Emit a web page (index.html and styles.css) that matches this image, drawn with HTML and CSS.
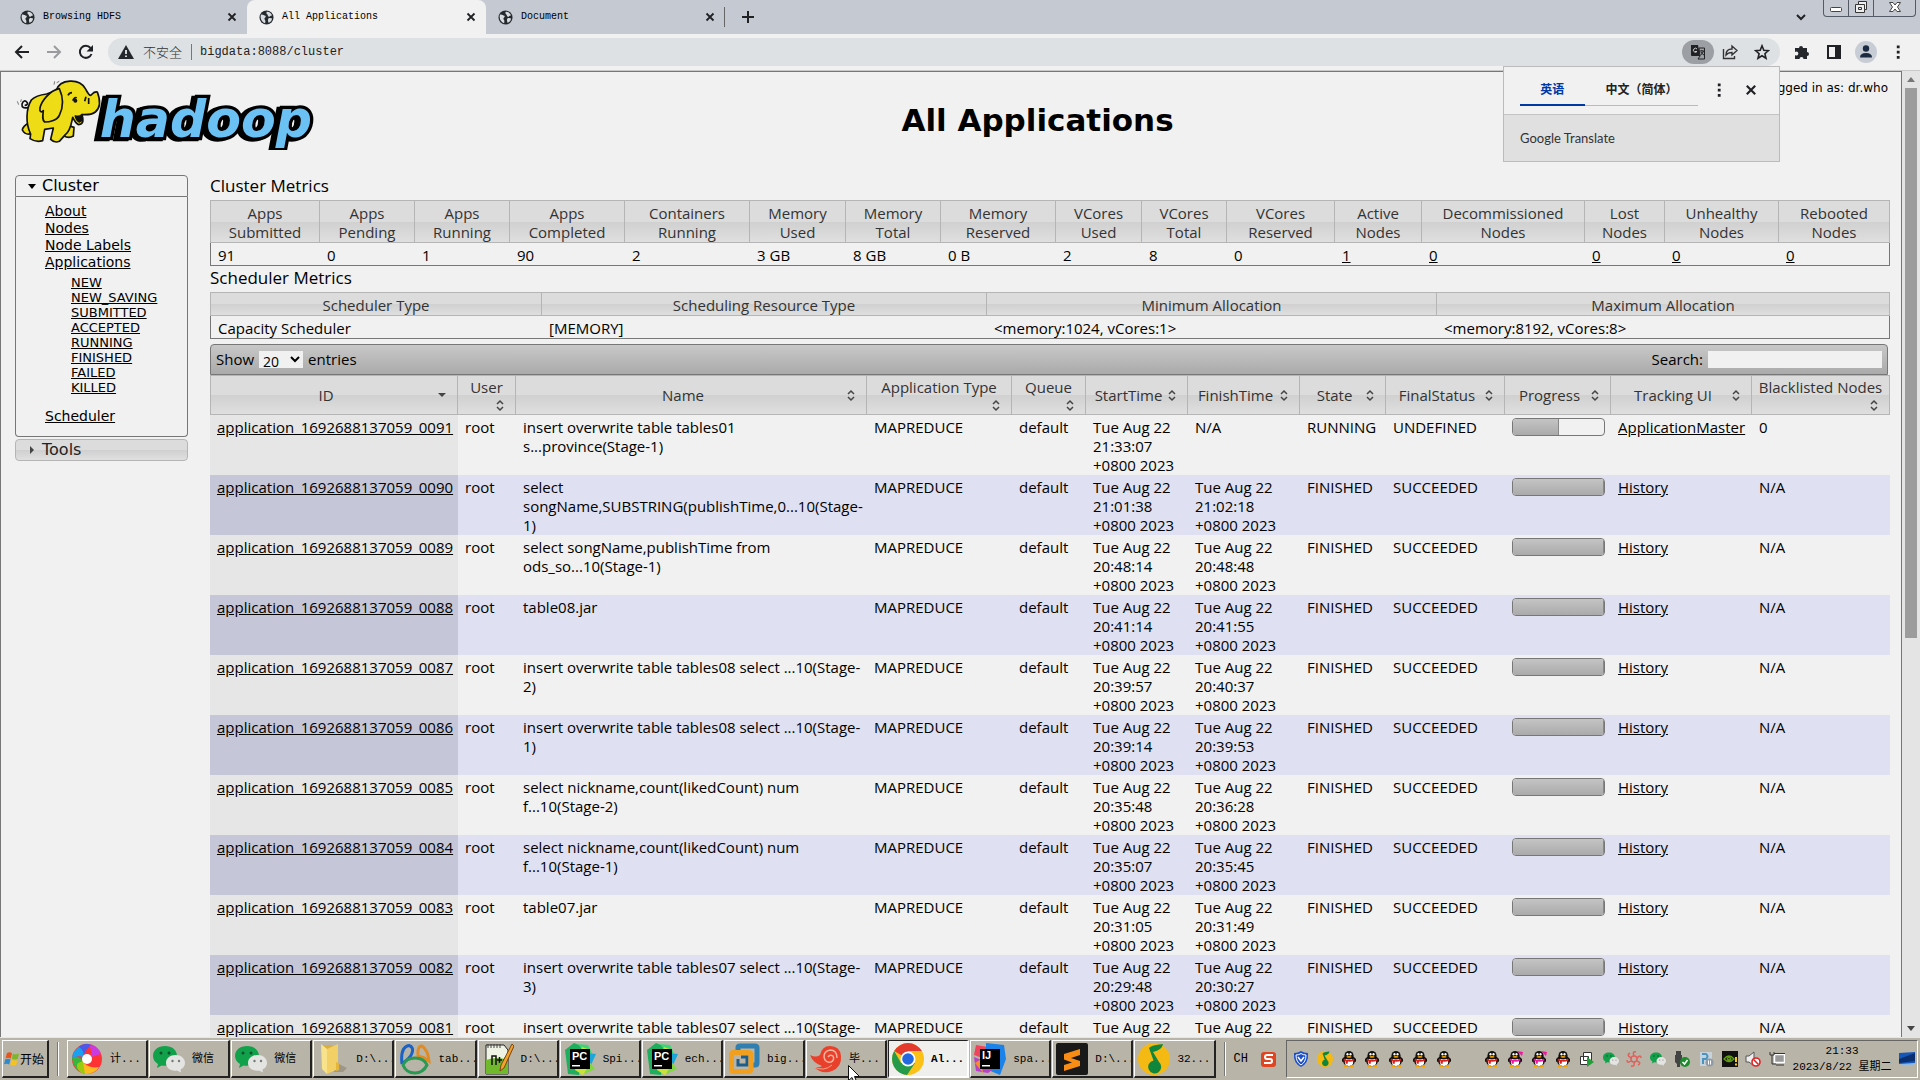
FILE: index.html
```html
<!DOCTYPE html>
<html lang="en">
<head>
    <meta charset="UTF-8">
    <meta name="viewport" content="width=device-width, initial-scale=1.0">
    <title>All Applications</title>
    <link rel="stylesheet" href="styles.css">
</head>
<body>

<svg class="defs" width="0" height="0">
  <defs>
    <symbol id="globe" viewBox="0 0 16 16">
      <circle cx="8" cy="8" r="7.5" fill="#24292e"/>
      <path d="M2 5 C4 4 5 6 7 6 C8 8 5 8 6 10 C7 11 7 12 6.500 14 C3 13 1 9 2 5z M8 2 C11 1.500 13.500 4 14 6 C12 5.500 12 8 10 7 C9 6 10 5 8 4z M10 9 C12 8 13 9 14 9 C13.500 12 12 13 10 13.500 C10 12 9 11 10 9z" fill="#d8dbe0"/>
    </symbol>
    <symbol id="close" viewBox="0 0 10 10">
      <path d="M1.500 1.500 L8.500 8.500 M8.500 1.500 L1.500 8.500" stroke="#202124" stroke-width="1.800"/>
    </symbol>
    <symbol id="dots" viewBox="0 0 16 16">
      <path d="M6.800 1.500h2.800v2.800H6.800z M6.800 6.700h2.800v2.800H6.800z M6.800 11.900h2.800v2.800H6.800z" fill="#202124"/>
    </symbol>
    <symbol id="sort" viewBox="0 0 16 16">
      <path d="M5 7 L8 4 L11 7 M5 10 L8 13 L11 10" fill="none" stroke="#444" stroke-width="1.500"/>
    </symbol>
    <symbol id="wechat" viewBox="0 0 32 28">
      <path d="M12 1 C5 1 0 5 0 11 C0 14.500 2 17.500 5 19 L4 23 L8.500 20.500 C17 22 24 17 24 11 C24 5 19 1 12 1z" fill="#12a14b"/>
      <path d="M22.500 10 C17 10 13 13.500 13 18 C13 23 18 26.500 24 25.500 L28 27.500 L27.500 24.500 C30.500 23 32 20.500 32 18 C32 13.500 28 10 22.500 10z" fill="#e4e4e2"/>
      <circle cx="8" cy="8" r="1.500" fill="#13502d"/><circle cx="16" cy="8" r="1.500" fill="#13502d"/>
      <circle cx="19.500" cy="16" r="1.200" fill="#777"/><circle cx="26" cy="16" r="1.200" fill="#777"/>
    </symbol>
    <symbol id="pycharm" viewBox="0 0 32 32">
      <path d="M1 7 L10 0 L20 4 L15 32 L4 31z" fill="#1fae5e"/>
      <path d="M14 1 L24 2 L28 10 L22 12z" fill="#3bd675"/>
      <path d="M23 10 L32 11 L27 22z" fill="#19a6d8"/>
      <path d="M18 4 L26 7 L25 25 L19 32 L11 27z" fill="#c8e33a"/>
      <path d="M26 20 L31 26 L20 31z" fill="#7fd840"/>
      <path d="M6 6h20v20H6z" fill="#000"/>
      <text x="8" y="17" class="ide">PC</text>
      <path d="M8 22h8v1.500H8z" fill="#fff"/>
    </symbol>
    <symbol id="penguin" viewBox="0 0 16 16">
      <path d="M1 8 L4 5 L12 5 L15 8 L15 11 L13 10 L3 10 L1 11z" fill="#111"/>
      <ellipse cx="8" cy="10.500" rx="5.800" ry="4.700" fill="#111"/>
      <ellipse cx="8" cy="11" rx="4.200" ry="4" fill="#fff"/>
      <ellipse cx="8" cy="4.300" rx="4.500" ry="4.300" fill="#111"/>
      <ellipse cx="6.500" cy="3.300" rx="1.100" ry="1.300" fill="#fff"/><ellipse cx="9.500" cy="3.300" rx="1.100" ry="1.300" fill="#fff"/>
      <ellipse cx="8" cy="5.800" rx="2.600" ry="0.900" fill="#f5a300"/>
      <path d="M3 7.500 Q8 10.500 13 7.500 L13.500 9.500 Q10 11 7 10.600 L6.500 13 L4.500 12.500 L4.500 10 L2.500 9.500z" fill="currentColor"/>
      <path d="M3 14h4v2H3z M9 14h4v2H9z" fill="#f5a300"/>
    </symbol>
    <symbol id="music" viewBox="0 0 32 32">
      <circle cx="16" cy="16" r="16" fill="#f4b912"/>
      <path d="M11 5 Q13 2 25 1 Q24 7 15 9 L21 19 A6.500 6.500 0 1 1 15.500 17.500z" fill="#10853c"/>
    </symbol>
  </defs>
</svg>

<header class="tabstrip">
    <div class="tab">
        <svg class="fav"><use href="#globe"/></svg>
        <span>Browsing HDFS</span>
        <button aria-label="Close Browsing HDFS"><svg class="x"><use href="#close"/></svg></button>
    </div>
    <div class="tab active">
        <svg class="fav"><use href="#globe"/></svg>
        <span>All Applications</span>
        <button aria-label="Close All Applications"><svg class="x"><use href="#close"/></svg></button>
    </div>
    <div class="tab last">
        <svg class="fav"><use href="#globe"/></svg>
        <span>Document</span>
        <button aria-label="Close Document"><svg class="x"><use href="#close"/></svg></button>
    </div>
    <button class="newtab" aria-label="New tab"><svg width="14" height="14" viewBox="0 0 14 14"><path d="M7 1v12M1 7h12" stroke="#202124" stroke-width="2"/></svg></button>
    <button class="tabsearch" aria-label="Search tabs"><svg width="12" height="12" viewBox="0 0 12 12"><path d="M2 4l4 4 4-4" fill="none" stroke="#202124" stroke-width="2"/></svg></button>
    <div class="winctl">
        <button aria-label="Minimize"><svg width="14" height="14" viewBox="0 0 14 14"><rect x="1.500" y="7.500" width="11" height="4" rx="1" fill="#fff" stroke="#444"/></svg></button>
        <button aria-label="Restore"><svg width="14" height="14" viewBox="0 0 14 14"><path d="M4.500 1.500h8v8h-2v3h-9v-8h3z M4.500 4.500h6v5 M4.500 7.500h3v2h-3z" fill="#eee" stroke="#333"/></svg></button>
        <button class="wide" aria-label="Close"><svg width="14" height="14" viewBox="0 0 14 14"><path d="M1.500 2.500h3.500l2 2.500 2-2.500h3.500L9.500 7l3 4.500H9L7 9l-2 2.500H1.500l3-4.500z" fill="#fff" stroke="#444"/></svg></button>
    </div>
</header>

<nav class="toolbar">
    <button class="tool" aria-label="Back"><svg width="16" height="16" viewBox="0 0 16 16"><path d="M15 8H2M8 2L2 8l6 6" fill="none" stroke="#202124" stroke-width="2"/></svg></button>
    <button class="tool" aria-label="Forward"><svg width="16" height="16" viewBox="0 0 16 16"><path d="M1 8h13M8 2l6 6-6 6" fill="none" stroke="#999b9e" stroke-width="2"/></svg></button>
    <button class="tool" aria-label="Reload"><svg width="16" height="16" viewBox="0 0 16 16"><path d="M13.500 10A6 6 0 1 1 12.500 4" fill="none" stroke="#202124" stroke-width="2"/><path d="M15 1v6.500H8.500z" fill="#202124"/></svg></button>
    <div class="omnibox">
        <svg width="16" height="14" viewBox="0 0 16 14"><path d="M8 0l8 14H0z" fill="#24282c"/><path d="M7.200 5h1.600v4H7.200z M7.200 10.500h1.600V12H7.200z" fill="#fff"/></svg>
        <span class="insecure">不安全</span>
        <input class="url" type="text" value="bigdata:8088/cluster" aria-label="Address">
        <button class="tool pill" aria-label="Translate"><svg width="16" height="16" viewBox="0 0 16 16"><path d="M1 1h7l2 11H2q-1 0-1-1z" fill="#202124"/><path d="M9 4h5.500v11H8l2-3z" fill="none" stroke="#202124"/><path d="M7 5a2 2 0 1 0 0 2.500H5" fill="none" stroke="#ccc"/><path d="M10 7h4M12 6v1M13.500 7q-1 3-3 4M11 8q1 2 3 3" fill="none" stroke="#202124"/></svg></button>
        <button class="tool" aria-label="Share"><svg width="16" height="16" viewBox="0 0 16 16"><path d="M1.500 5v9.500h11V12M4 11q0-6 6-6V2l5 4.500-5 4.500V8.500q-4 0-6 2.500z" fill="none" stroke="#333" stroke-width="1.400"/></svg></button>
        <button class="tool" aria-label="Bookmark"><svg width="16" height="16" viewBox="0 0 16 16"><path d="M8 1.800l1.800 4.400 4.700.4-3.600 3.100 1.100 4.600L8 11.800l-4 2.500 1.100-4.600L1.500 6.600l4.700-.4z" fill="none" stroke="#202124" stroke-width="1.600"/></svg></button>
    </div>
    <button class="tool" aria-label="Extensions"><svg width="16" height="16" viewBox="0 0 16 16"><path d="M1 4h4a2 2 0 1 1 4 0h4v4a2 2 0 1 1 0 4v3H9.500a2 2 0 1 0-4 0H1v-4a2 2 0 1 0 0-3z" fill="#24282c"/></svg></button>
    <button class="tool" aria-label="Side panel"><svg width="16" height="16" viewBox="0 0 16 16"><path d="M1 1h14v14H1z M3 3v10h6V3z" fill="#202124" fill-rule="evenodd"/></svg></button>
    <button class="tool" aria-label="Profile"><svg width="22" height="22" viewBox="0 0 22 22"><circle cx="11" cy="11" r="11" fill="#c8ccd4"/><circle cx="11" cy="7.500" r="3.200" fill="#1c2b41"/><path d="M5 16.500q0-4.500 6-4.500t6 4.500z" fill="#1c2b41"/></svg></button>
    <button class="tool" aria-label="Menu"><svg width="16" height="16"><use href="#dots"/></svg></button>
</nav>

<div class="viewport">
<div class="page">
    <div class="head">
        <a class="logo" href="#" aria-label="Hadoop">
        <svg width="300" height="78" viewBox="45 6 900 234">
          <g fill="#eedd16" stroke="#111" stroke-width="5" stroke-linejoin="round">
            <path d="M86 112 Q64 118 66 102 Q72 86 82 98 Q84 106 74 106" fill="none"/>
            <path d="M88 158 Q68 168 67 180 Q74 194 90 192z"/>
            <path d="M200 165 L222 172 L220 198 Q206 206 192 198z"/>
            <path d="M168 62 C180 26 238 24 256 56 C262 66 266 76 272 76 C278 72 280 64 292 66 C302 92 300 114 286 126 C274 136 254 134 246 134 C250 150 252 162 236 164 C226 160 222 148 218 142 C214 160 212 182 196 194 L178 214 Q164 220 152 208 L160 174 L134 178 L128 212 Q108 218 90 206 L92 192 C76 160 78 116 94 90 C106 78 124 74 140 72 C150 68 158 66 168 62z"/>
            <path d="M178 56 C148 62 124 94 120 114 C118 126 124 128 130 122 C128 138 126 150 134 156 C150 156 172 150 178 136 C190 112 190 82 178 56z"/>
            <path d="M204 76 q4-8 12-8 M218 92 q6-12 12-8 M258 80 l-4 14 M266 84 v18" fill="none"/>
            <path d="M226 138 q12 4 20-4 q4 20 -8 22 q-8-4-12-18z" fill="#111"/>
            <path d="M56 104l-4-10M62 96l2-8M162 44l2-10M170 38l8-4" stroke="#777" stroke-width="3"/>
          </g>
          <circle cx="226" cy="92" r="6" fill="#111"/>
          <text x="289" y="204" class="word back">hadoop</text>
          <text x="299" y="201" class="word">hadoop</text>
        </svg>
        </a>
        <h1>All Applications</h1>
        <div class="user">Logged in as: dr.who</div>
    </div>

    <div class="columns">
    <aside class="nav">
        <h3 class="open"><a href="#"><svg width="8" height="5" viewBox="0 0 8 5"><path d="M0 0h8L4 5z"/></svg>Cluster</a></h3>
        <div class="menu">
            <ul>
                <li><a href="#">About</a></li>
                <li><a href="#">Nodes</a></li>
                <li><a href="#">Node Labels</a></li>
                <li><a href="#">Applications</a>
                    <ul class="sub">
                        <li><a href="#">NEW</a></li>
                        <li><a href="#">NEW_SAVING</a></li>
                        <li><a href="#">SUBMITTED</a></li>
                        <li><a href="#">ACCEPTED</a></li>
                        <li><a href="#">RUNNING</a></li>
                        <li><a href="#">FINISHED</a></li>
                        <li><a href="#">FAILED</a></li>
                        <li><a href="#">KILLED</a></li>
                    </ul>
                </li>
                <li><a href="#">Scheduler</a></li>
            </ul>
        </div>
        <h3 class="shut"><a href="#"><svg width="8" height="8" viewBox="0 0 8 8"><path d="M2 0v8l4-4z" fill="#444"/></svg>Tools</a></h3>
    </aside>

    <main>
        <h2>Cluster Metrics</h2>
        <table class="info metrics">
            <colgroup><col><col><col><col><col><col><col><col><col><col><col><col><col><col><col><col></colgroup>
            <thead>
            <tr>
                <th>Apps<br>Submitted</th><th>Apps<br>Pending</th><th>Apps<br>Running</th><th>Apps<br>Completed</th>
                <th>Containers<br>Running</th><th>Memory<br>Used</th><th>Memory<br>Total</th><th>Memory<br>Reserved</th>
                <th>VCores<br>Used</th><th>VCores<br>Total</th><th>VCores<br>Reserved</th><th>Active<br>Nodes</th>
                <th>Decommissioned<br>Nodes</th><th>Lost<br>Nodes</th><th>Unhealthy<br>Nodes</th><th>Rebooted<br>Nodes</th>
            </tr>
            </thead>
            <tbody>
            <tr>
                <td>91</td><td>0</td><td>1</td><td>90</td><td>2</td><td>3 GB</td><td>8 GB</td><td>0 B</td>
                <td>2</td><td>8</td><td>0</td><td><a href="#">1</a></td><td><a href="#">0</a></td>
                <td><a href="#">0</a></td><td><a href="#">0</a></td><td><a href="#">0</a></td>
            </tr>
            </tbody>
        </table>

        <h2>Scheduler Metrics</h2>
        <table class="info scheduler">
            <colgroup><col><col><col><col></colgroup>
            <thead>
            <tr><th>Scheduler Type</th><th>Scheduling Resource Type</th><th>Minimum Allocation</th><th>Maximum Allocation</th></tr>
            </thead>
            <tbody>
            <tr><td>Capacity Scheduler</td><td>[MEMORY]</td><td>&lt;memory:1024, vCores:1&gt;</td><td>&lt;memory:8192, vCores:8&gt;</td></tr>
            </tbody>
        </table>

        <div class="filter">
            <label>Show <select><option>20</option><option>40</option><option>100</option></select> entries</label>
            <label>Search: <input type="text"></label>
        </div>
        <table class="apps">
            <colgroup><col><col><col><col><col><col><col><col><col><col><col><col></colgroup>
            <thead>
            <tr>
                <th><button><span>ID</span><svg viewBox="0 0 16 16"><path d="M4 6h8l-4 4z" fill="#444"/></svg></button></th>
                <th><button class="wrap"><span>User</span><svg><use href="#sort"/></svg></button></th>
                <th><button><span>Name</span><svg><use href="#sort"/></svg></button></th>
                <th><button class="wrap"><span>Application Type</span><svg><use href="#sort"/></svg></button></th>
                <th><button class="wrap"><span>Queue</span><svg><use href="#sort"/></svg></button></th>
                <th><button><span>StartTime</span><svg><use href="#sort"/></svg></button></th>
                <th><button><span>FinishTime</span><svg><use href="#sort"/></svg></button></th>
                <th><button><span>State</span><svg><use href="#sort"/></svg></button></th>
                <th><button><span>FinalStatus</span><svg><use href="#sort"/></svg></button></th>
                <th><button><span>Progress</span><svg><use href="#sort"/></svg></button></th>
                <th><button><span>Tracking UI</span><svg><use href="#sort"/></svg></button></th>
                <th><button class="wrap"><span>Blacklisted Nodes</span><svg><use href="#sort"/></svg></button></th>
            </tr>
            </thead>
            <tbody>
            <tr>
                <td><a href="#">application_1692688137059_0091</a></td><td>root</td>
                <td>insert overwrite table tables01<br>s...province(Stage-1)</td><td>MAPREDUCE</td><td>default</td>
                <td>Tue Aug 22<br>21:33:07<br>+0800 2023</td><td>N/A</td>
                <td>RUNNING</td><td>UNDEFINED</td><td><div class="bar"><div style="width:50%"></div></div></td>
                <td><a href="#">ApplicationMaster</a></td><td>0</td>
            </tr>
            <tr>
                <td><a href="#">application_1692688137059_0090</a></td><td>root</td>
                <td>select<br>songName,SUBSTRING(publishTime,0...10(Stage-<br>1)</td><td>MAPREDUCE</td><td>default</td>
                <td>Tue Aug 22<br>21:01:38<br>+0800 2023</td><td>Tue Aug 22<br>21:02:18<br>+0800 2023</td>
                <td>FINISHED</td><td>SUCCEEDED</td><td><div class="bar"><div style="width:100%"></div></div></td>
                <td><a href="#">History</a></td><td>N/A</td>
            </tr>
            <tr>
                <td><a href="#">application_1692688137059_0089</a></td><td>root</td>
                <td>select songName,publishTime from<br>ods_so...10(Stage-1)</td><td>MAPREDUCE</td><td>default</td>
                <td>Tue Aug 22<br>20:48:14<br>+0800 2023</td><td>Tue Aug 22<br>20:48:48<br>+0800 2023</td>
                <td>FINISHED</td><td>SUCCEEDED</td><td><div class="bar"><div style="width:100%"></div></div></td>
                <td><a href="#">History</a></td><td>N/A</td>
            </tr>
            <tr>
                <td><a href="#">application_1692688137059_0088</a></td><td>root</td>
                <td>table08.jar</td><td>MAPREDUCE</td><td>default</td>
                <td>Tue Aug 22<br>20:41:14<br>+0800 2023</td><td>Tue Aug 22<br>20:41:55<br>+0800 2023</td>
                <td>FINISHED</td><td>SUCCEEDED</td><td><div class="bar"><div style="width:100%"></div></div></td>
                <td><a href="#">History</a></td><td>N/A</td>
            </tr>
            <tr>
                <td><a href="#">application_1692688137059_0087</a></td><td>root</td>
                <td>insert overwrite table tables08 select ...10(Stage-<br>2)</td><td>MAPREDUCE</td><td>default</td>
                <td>Tue Aug 22<br>20:39:57<br>+0800 2023</td><td>Tue Aug 22<br>20:40:37<br>+0800 2023</td>
                <td>FINISHED</td><td>SUCCEEDED</td><td><div class="bar"><div style="width:100%"></div></div></td>
                <td><a href="#">History</a></td><td>N/A</td>
            </tr>
            <tr>
                <td><a href="#">application_1692688137059_0086</a></td><td>root</td>
                <td>insert overwrite table tables08 select ...10(Stage-<br>1)</td><td>MAPREDUCE</td><td>default</td>
                <td>Tue Aug 22<br>20:39:14<br>+0800 2023</td><td>Tue Aug 22<br>20:39:53<br>+0800 2023</td>
                <td>FINISHED</td><td>SUCCEEDED</td><td><div class="bar"><div style="width:100%"></div></div></td>
                <td><a href="#">History</a></td><td>N/A</td>
            </tr>
            <tr>
                <td><a href="#">application_1692688137059_0085</a></td><td>root</td>
                <td>select nickname,count(likedCount) num<br>f...10(Stage-2)</td><td>MAPREDUCE</td><td>default</td>
                <td>Tue Aug 22<br>20:35:48<br>+0800 2023</td><td>Tue Aug 22<br>20:36:28<br>+0800 2023</td>
                <td>FINISHED</td><td>SUCCEEDED</td><td><div class="bar"><div style="width:100%"></div></div></td>
                <td><a href="#">History</a></td><td>N/A</td>
            </tr>
            <tr>
                <td><a href="#">application_1692688137059_0084</a></td><td>root</td>
                <td>select nickname,count(likedCount) num<br>f...10(Stage-1)</td><td>MAPREDUCE</td><td>default</td>
                <td>Tue Aug 22<br>20:35:07<br>+0800 2023</td><td>Tue Aug 22<br>20:35:45<br>+0800 2023</td>
                <td>FINISHED</td><td>SUCCEEDED</td><td><div class="bar"><div style="width:100%"></div></div></td>
                <td><a href="#">History</a></td><td>N/A</td>
            </tr>
            <tr>
                <td><a href="#">application_1692688137059_0083</a></td><td>root</td>
                <td>table07.jar</td><td>MAPREDUCE</td><td>default</td>
                <td>Tue Aug 22<br>20:31:05<br>+0800 2023</td><td>Tue Aug 22<br>20:31:49<br>+0800 2023</td>
                <td>FINISHED</td><td>SUCCEEDED</td><td><div class="bar"><div style="width:100%"></div></div></td>
                <td><a href="#">History</a></td><td>N/A</td>
            </tr>
            <tr>
                <td><a href="#">application_1692688137059_0082</a></td><td>root</td>
                <td>insert overwrite table tables07 select ...10(Stage-<br>3)</td><td>MAPREDUCE</td><td>default</td>
                <td>Tue Aug 22<br>20:29:48<br>+0800 2023</td><td>Tue Aug 22<br>20:30:27<br>+0800 2023</td>
                <td>FINISHED</td><td>SUCCEEDED</td><td><div class="bar"><div style="width:100%"></div></div></td>
                <td><a href="#">History</a></td><td>N/A</td>
            </tr>
            <tr>
                <td><a href="#">application_1692688137059_0081</a></td><td>root</td>
                <td>insert overwrite table tables07 select ...10(Stage-</td><td>MAPREDUCE</td><td>default</td>
                <td>Tue Aug 22</td><td>Tue Aug 22</td>
                <td>FINISHED</td><td>SUCCEEDED</td><td><div class="bar"><div style="width:100%"></div></div></td>
                <td><a href="#">History</a></td><td>N/A</td>
            </tr>
            </tbody>
        </table>
    </main>
    </div>
</div>

<div class="scrollbar">
    <svg width="8" height="5" viewBox="0 0 8 5"><path d="M0 5h8L4 0z" fill="#777"/></svg>
    <div class="track"><div class="thumb"></div></div>
    <svg width="8" height="5" viewBox="0 0 8 5"><path d="M0 0h8L4 5z" fill="#444"/></svg>
</div>
</div>

<div class="translate">
    <div class="langs">
        <button class="lang on">英语</button>
        <button class="lang">中文（简体）</button>
        <button class="icon" aria-label="Options"><svg width="16" height="16"><use href="#dots"/></svg></button>
        <button class="icon" aria-label="Close translate"><svg width="12" height="12"><use href="#close"/></svg></button>
    </div>
    <div class="brand">Google Translate</div>
</div>

<footer class="taskbar">
    <button class="start"><svg width="16" height="16" viewBox="0 0 16 16"><path d="M3 2q3-1.500 5 .3L6.800 7.500Q4.500 6 1.500 7.200z" fill="#e8541c"/><path d="M8.800 2.800q3 1.200 6.200-.3L13.800 8q-3 1-6-.3z" fill="#7fb52c"/><path d="M1.300 8.200q3-1.200 5.200.2L5.200 13.500Q3 12.200 0 13.200z" fill="#2f8bd0"/><path d="M7.500 8.800q3 1.400 6 .2L12.200 14q-3 1.200-6-.2z" fill="#f6c21c"/></svg>开始</button>
    <span class="sep"></span>
    <div class="tasks">
        <button class="task"><svg viewBox="0 0 32 32"><circle cx="16" cy="16" r="15" fill="#f33"/><path d="M16 1A15 15 0 0 1 30 11L20 14Q22 6 16 1z" fill="#c93be0"/><path d="M8 3.500Q14-1 20 2Q14 8 12 13z" fill="#4d58e8"/><path d="M1 16Q1 8 8 4Q14 8 12 14Q6 12 1 16z" fill="#1aa0f0"/><path d="M1 15Q8 12 12 18Q9 24 13 30Q2 27 1 15z" fill="#37b53c"/><path d="M12 18Q12 24 22 29Q15 33 9 29Q4 24 7 20z" fill="#9c1"/><path d="M12 19Q18 26 28 24Q24 31 14 31z" fill="#fb2"/><circle cx="16" cy="16" r="5" fill="#fff"/></svg>计...</button>
        <button class="task"><svg viewBox="0 0 32 32"><use href="#wechat" width="32" height="28" y="2"/></svg>微信</button>
        <button class="task"><svg viewBox="0 0 32 32"><use href="#wechat" width="32" height="28" y="2"/></svg>微信</button>
        <button class="task"><svg viewBox="0 0 32 32"><path d="M16 29l10 0 4-4-8-4z" fill="#8c8470" opacity=".6"/><path d="M5 2l9 0 3 2v25H7z" fill="#d9b03c"/><path d="M4 1l6 5v25L5 26z" fill="#f9e28c"/><path d="M10 6l11-5v25l-11 5z" fill="#f2d066"/><path d="M19 19l3 1v7l-3 1z" fill="#e5b63c"/></svg>D:\...</button>
        <button class="task"><svg viewBox="0 0 32 32" fill="none" stroke-width="3"><path d="M3 21Q1 4 10 2.500Q15 4 13 10Q12 14 4 20" stroke="#1b62c4"/><path d="M19 13Q18 3 23 3Q29 7 30 18Q25 14 19 13z" stroke="#e08b23"/><path d="M4 22Q7 15 16 15Q25 15 28 22Q24 30 16 30Q7 30 4 22z" stroke="#2a9a52"/></svg>tab...</button>
        <button class="task"><svg viewBox="0 0 32 32"><path d="M4 2h18l4 5v24H4z" fill="#eef3e6" stroke="#222"/><path d="M4 17q11-4 22 0v14H4z" fill="#70b92c"/><path d="M6 1v4M9 1v4M12 1v4M15 1v4M18 1v4" stroke="#444"/><path d="M10 22v-9h4v9M15 17h5M17.500 14v6M21 17h5M23.500 14v6" fill="none" stroke="#111" stroke-width="1.500"/><path d="M30 1l2 2-10 22-4 3 1-6z" fill="#f0a42c" stroke="#7b4412"/></svg>D:\...</button>
        <button class="task"><svg viewBox="0 0 32 32"><use href="#pycharm" width="32" height="32"/></svg>Spi...</button>
        <button class="task"><svg viewBox="0 0 32 32"><use href="#pycharm" width="32" height="32"/></svg>ech...</button>
        <button class="task"><svg viewBox="0 0 32 32" fill="none" stroke-width="5"><path d="M10 10V4.500Q10 3 12 3H27Q29 3 29 5V20Q29 22 27 22H22" stroke="#2f7fb0"/><path d="M10 16v6h9v-8h-6" stroke="#1b5e8c" stroke-width="3"/><path d="M5 9.500H20Q23 9.500 23 12V26Q23 28.500 20 28.500H6Q3.500 28.500 3.500 26V12Q3.500 9.500 5 9.500z" stroke="#f0a01e"/></svg>big...</button>
        <button class="task"><svg viewBox="0 0 32 32"><path d="M0 12Q6 15 10 12Q12 3 20 3Q30 3 31 13Q32 24 22 28Q12 32 4 24Q10 25 12 23Q3 20 0 12z" fill="#e8402a"/><path d="M27 15Q27 7 20 7Q14 8 14 14Q15 20 21 19Q25 17 23 13Q20 11 18 14" fill="none" stroke="#f9b4a0" stroke-width="1.500"/><path d="M4 24Q14 29 22 22" stroke="#f9a58c" fill="none"/></svg>毕...</button>
        <button class="task current"><svg viewBox="0 0 32 32"><circle cx="16" cy="16" r="16" fill="#fbc116"/><path d="M16 16L2.200 8A16 16 0 0 1 29.800 8H16z" fill="#e33b2e"/><path d="M2.200 8A16 16 0 0 0 15 32L23 20 9 20z" fill="#249a4a"/><circle cx="16" cy="16" r="7.500" fill="#fff"/><circle cx="16" cy="16" r="5.800" fill="#2468e0"/></svg>Al...</button>
        <button class="task"><svg viewBox="0 0 32 32"><path d="M2 2l12 2-3 12L0 12z" fill="#f0445c"/><path d="M12 0l18 2 2 14-6 16-14-6z" fill="#1b82ea"/><path d="M0 14l10 4 12 6-8 6-12-2z" fill="#b940c8"/><path d="M1 20l6-4 2 14z" fill="#f78c2a"/><path d="M6 6h20v20H6z" fill="#000"/><text x="8" y="16" class="ide">IJ</text><path d="M8 22h8v1.500H8z" fill="#fff"/></svg>spa...</button>
        <button class="task"><svg viewBox="0 0 32 32"><path d="M2 0h28q2 0 2 2v28q0 2-2 2H2q-2 0-2-2V2q0-2 2-2z" fill="#191919"/><path d="M8 11L24 6v6l-9 3 9 3v5L8 28v-6l8-2.500-8-3z" fill="#f88c14"/></svg>D:\...</button>
        <button class="task"><svg viewBox="0 0 32 32"><use href="#music" width="32" height="32"/></svg>32...</button>
    </div>
    <span class="sep"></span>
    <span class="ime">CH</span>
    <svg class="sogou" width="18" height="18" viewBox="0 0 18 18"><rect x="1" y="2" width="15" height="15" rx="3" fill="#e04522"/><path d="M13 5H7Q5 5 5 7T7 9h3q2 0 2 2T10 13H4" fill="none" stroke="#fff" stroke-width="2"/></svg>
    <div class="tray">
        <svg viewBox="0 0 16 16"><path d="M1 2Q5 2 8 0Q11 2 15 2Q16 12 8 16Q0 12 1 2z" fill="#1d50c8"/><path d="M3 4q3 0 5-1.500Q10 4 13 4q0 7-5 10Q3 11 3 4z" fill="none" stroke="#fff"/><path d="M5 6l3 4 3-4" fill="none" stroke="#fff" stroke-width="1.500"/></svg>
        <svg viewBox="0 0 16 16"><use href="#music" width="16" height="16"/></svg>
        <svg class="red"><use href="#penguin"/></svg>
        <svg class="red"><use href="#penguin"/></svg>
        <svg class="red"><use href="#penguin"/></svg>
        <svg class="red"><use href="#penguin"/></svg>
        <svg class="red"><use href="#penguin"/></svg>
        <svg></svg>
        <svg class="red"><use href="#penguin"/></svg>
        <svg class="pink" viewBox="0 0 16 16"><use href="#penguin" width="16" height="16"/><path d="M10 0l6 1-1 4z" fill="currentColor"/></svg>
        <svg class="pink" viewBox="0 0 16 16"><use href="#penguin" width="16" height="16"/><path d="M10 0l6 1-1 4z" fill="currentColor"/></svg>
        <svg class="red"><use href="#penguin"/></svg>
        <svg viewBox="0 0 16 16"><path d="M4.500 1.500h8v8h-8z M1.500 5.500h8v8h-8z" fill="#fff" stroke="#333"/><path d="M8 6l7 5-7 5z" fill="#22a038"/></svg>
        <svg viewBox="0 0 16 16"><use href="#wechat" width="16" height="14" y="1"/></svg>
        <svg viewBox="0 0 16 16" fill="none" stroke="#e0605c" stroke-width="1.500"><path d="M8 5Q6 0 10 1M11 7Q15 3 15 7M11 10Q16 12 12 14M8 11Q9 16 5 15M5 10Q1 13 1 9M5 7Q0 4 4 2"/><circle cx="8" cy="8" r="3"/></svg>
        <svg viewBox="0 0 16 16"><use href="#wechat" width="16" height="14" y="1"/></svg>
        <svg viewBox="0 0 16 16"><path d="M2 0h5v4h1v7l-2 2v3H3v-3L1 11V4h1z" fill="#444"/><circle cx="11" cy="11" r="5" fill="#1c8c2c"/><path d="M8.500 11l2 2 3-4" fill="none" stroke="#fff" stroke-width="1.500"/></svg>
        <svg viewBox="0 0 16 16"><path d="M2 1h12v14H2z" fill="#c6d2dc"/><path d="M4 3h4q3 2 0 5H5v5" fill="none" stroke="#4b93bf" stroke-width="2"/><circle cx="11.500" cy="11.500" r="4" fill="#8f9aa5"/><path d="M10.500 9.500v4M12.500 9.500v4" stroke="#fff"/></svg>
        <svg viewBox="0 0 16 16"><path d="M0 0h16v16H0z" fill="#111"/><path d="M2 8q5-6 10 0-5 5-10 0zM5 8q2-3 4 0-2 2-4 0" fill="none" stroke="#5f9f10" stroke-width="1.300"/><path d="M13 6h2v5h-2zM13 12.500h2v2h-2z" fill="#fc0"/></svg>
        <svg viewBox="0 0 16 16"><path d="M1 5h3l5-4v14l-5-4H1z" fill="#eee" stroke="#555"/><circle cx="11" cy="11" r="4" fill="#fff" stroke="#d22" stroke-width="1.600"/><path d="M8.500 8.500l5 5" stroke="#d22" stroke-width="1.600"/></svg>
        <svg viewBox="0 0 16 16"><path d="M5.500 3.500h10v8h-10z" fill="#999" stroke="#fff" stroke-width="1.500"/><path d="M5 2.500h11M7 14h8" stroke="#333"/><path d="M1 1v3h4V1M3 4v9h4" stroke="#333" fill="none"/></svg>
        <div class="clock"><time>21:33</time><time>2023/8/22 星期二</time></div>
        <svg viewBox="0 0 16 16"><path d="M0 2l16-1v11l-16 1z" fill="#1557b8"/><path d="M0 8l16-6v8l-16 2z" fill="#0a2f70"/><path d="M2 13h12v1H2z" fill="#8fb6e0"/></svg>
    </div>
</footer>

<svg class="cursor" width="12" height="19" viewBox="0 0 12 19"><path d="M.5.500v15l3.500-3 2.500 6 2.500-1-2.500-6h5z" fill="#fff" stroke="#111"/></svg>

</body>
</html>
```

FILE: styles.css
```css
* {
    box-sizing: border-box;
}
body {
    margin: 0;
    height: 100vh;
    display: flex;
    flex-direction: column;
    overflow: hidden;
    position: relative;
    background: #f1f1f1;
    color: #000;
    font-family: "Open Sans", "Noto Sans CJK SC", sans-serif;
    font-size: 15px;
    line-height: 19px;
}
a {
    color: inherit;
}
button {
    margin: 0;
    padding: 0;
    border: 0;
    background: none;
    color: inherit;
    font: inherit;
}
svg {
    display: block;
    flex: none;
}
.defs {
    position: absolute;
}

/* browser chrome */
.tabstrip {
    display: flex;
    height: 34px;
    padding-left: 8px;
    background: #c5c9d1;
    font: 10px/16px "Liberation Mono", "Noto Sans CJK SC", monospace;
    flex: none;
}
.tab {
    width: 239px;
    padding: 0 10px 0 12px;
    display: flex;
    align-items: center;
    gap: 8px;
}
.tab span {
    flex: 1;
}
.tab.active {
    background: #f1f1f1;
    border-radius: 8px 8px 0 0;
}
.tab.last {
    background: linear-gradient(#666, #666) right center / 1px 20px no-repeat;
}
.fav {
    width: 15px;
    height: 15px;
}
.x {
    width: 10px;
    height: 10px;
}
.newtab {
    margin-left: 16px;
}
.tabsearch {
    margin-left: auto;
    margin-right: 16px;
}
.winctl {
    display: flex;
    height: 17px;
    margin-right: 4px;
    border: 1px solid #555b66;
    border-top: 0;
    border-radius: 0 0 4px 4px;
}
.winctl button {
    width: 25px;
    display: flex;
    justify-content: center;
    border-right: 1px solid #555b66;
}
.winctl button.wide {
    width: 41px;
    border-right: 0;
}
.toolbar {
    display: flex;
    align-items: center;
    height: 37px;
    padding: 0 6px;
    border-bottom: 1px solid #c9c9c9;
    flex: none;
}
.tool {
    width: 32px;
    height: 24px;
    display: flex;
    align-items: center;
    justify-content: center;
    flex: none;
}
.pill {
    background: #9c9fa3;
    border-radius: 12px;
}
.omnibox {
    flex: 1;
    display: flex;
    align-items: center;
    height: 28px;
    margin: 0 6px;
    padding: 0 2px 0 10px;
    background: #dee1e4;
    border-radius: 14px;
    color: #333;
}
.insecure {
    margin-left: 9px;
    padding-right: 9px;
    border-right: 1px solid #777;
    font-family: "Noto Sans CJK SC", sans-serif;
    font-size: 13px;
    font-weight: 300;
    line-height: 16px;
}
.url {
    flex: 1;
    padding: 0;
    margin-left: 8px;
    border: 0;
    background: none;
    color: #222;
    font: 12px/16px "Liberation Mono", monospace;
}

/* page */
.viewport {
    flex: 1;
    min-height: 0;
    display: flex;
}
.page {
    flex: 1;
    min-width: 0;
    overflow: hidden;
    border: 1px solid #777;
    border-bottom: 0;
    padding: 0 13px 0 14px;
}
.head {
    display: grid;
    grid-template-columns: 300px 1fr 128px;
    height: 100px;
}
.logo {
    display: block;
}
.word {
    font: italic bold 152px "DejaVu Sans", sans-serif;
    fill: #6cc1f4;
    stroke: #000;
    stroke-width: 20px;
    stroke-linejoin: miter;
    paint-order: stroke;
}
.word.back {
    fill: #000;
}
h1 {
    margin: 28px 0 0;
    text-align: center;
    font: bold 31px/40px "DejaVu Sans", sans-serif;
}
.user {
    padding-top: 8px;
    text-align: right;
    white-space: nowrap;
    font: 12px/16px "DejaVu Sans", sans-serif;
}
.columns {
    display: flex;
    align-items: flex-start;
    gap: 22px;
}
.nav {
    width: 173px;
    margin-top: 3px;
    flex: none;
    font-family: "DejaVu Sans", sans-serif;
    font-size: 14px;
}
.nav h3 {
    margin: 0;
    border: 1px solid #777;
    border-radius: 4px 4px 0 0;
    font-size: 16px;
    font-weight: normal;
    line-height: 20px;
}
.nav h3 a {
    display: flex;
    align-items: center;
    gap: 6px;
    padding-left: 12px;
    text-decoration: none;
}
.nav h3.shut {
    margin-top: 2px;
    border-color: #b5b5b5;
    border-radius: 4px;
    color: #222;
    background: linear-gradient(#dcdcdc 50%, #cfcfcf 50%, #e0e0e0);
}
.menu {
    padding: 6px 0 11px 29px;
    border: 1px solid #777;
    border-top: 0;
    border-radius: 0 0 4px 4px;
}
.menu ul {
    margin: 0;
    padding: 0;
    list-style: none;
    line-height: 17px;
}
.menu .sub {
    padding: 4px 0 13px 26px;
    font-size: 13px;
    line-height: 15px;
}
main {
    flex: 1;
    min-width: 0;
    padding-top: 2px;
}
h2 {
    margin: 0;
    padding-bottom: 2px;
    font-size: 17px;
    font-weight: normal;
    line-height: 24px;
}
table {
    width: 100%;
    table-layout: fixed;
    border-collapse: separate;
    border-spacing: 0;
}
th, td {
    padding: 0;
    white-space: nowrap;
}
th {
    color: #333;
    font-weight: normal;
    border: solid #b5b5b5;
    border-width: 1px 1px 1px 0;
    background: linear-gradient(#dcdcdc 50%, #d0d0d0 50%, #dfdfdf);
}
th:first-child {
    border-left-width: 1px;
}
td {
    padding: 3px 6px 0 7px;
    text-align: left;
    vertical-align: top;
}
.info th {
    padding-top: 3px;
}
.info td {
    border-bottom: 1px solid #777;
}
.info td:first-child {
    border-left: 1px solid #777;
}
.info td:last-child {
    border-right: 1px solid #777;
}
.metrics col:nth-child(1) { width: 110px; }
.metrics col:nth-child(2) { width: 95px; }
.metrics col:nth-child(3) { width: 95px; }
.metrics col:nth-child(4) { width: 115px; }
.metrics col:nth-child(5) { width: 125px; }
.metrics col:nth-child(6) { width: 96px; }
.metrics col:nth-child(7) { width: 95px; }
.metrics col:nth-child(8) { width: 115px; }
.metrics col:nth-child(9) { width: 86px; }
.metrics col:nth-child(10) { width: 85px; }
.metrics col:nth-child(11) { width: 108px; }
.metrics col:nth-child(12) { width: 87px; }
.metrics col:nth-child(13) { width: 163px; }
.metrics col:nth-child(14) { width: 80px; }
.metrics col:nth-child(15) { width: 114px; }
.metrics col:nth-child(16) { width: 111px; }
.scheduler col:nth-child(1) { width: 332px; }
.scheduler col:nth-child(2) { width: 445px; }
.scheduler col:nth-child(3) { width: 450px; }
.scheduler col:nth-child(4) { width: 453px; }
.filter {
    display: flex;
    justify-content: space-between;
    align-items: center;
    height: 31px;
    margin-top: 5px;
    padding: 0 5px;
    border: 1px solid #777;
    border-radius: 4px 4px 0 0;
    background: linear-gradient(#c8c8c8, #aaa);
}
.filter label {
    display: flex;
    align-items: center;
    gap: 5px;
}
.filter select,
.filter input {
    height: 17px;
    border: 0;
    padding: 0;
    background: #f1f1f1;
    color: #000;
    font: 14px/17px "Open Sans", sans-serif;
}
.filter select {
    width: 44px;
}
.filter input {
    width: 174px;
}
.apps col:nth-child(1) { width: 248px; }
.apps col:nth-child(2) { width: 58px; }
.apps col:nth-child(3) { width: 351px; }
.apps col:nth-child(4) { width: 145px; }
.apps col:nth-child(5) { width: 74px; }
.apps col:nth-child(6) { width: 102px; }
.apps col:nth-child(7) { width: 112px; }
.apps col:nth-child(8) { width: 86px; }
.apps col:nth-child(9) { width: 119px; }
.apps col:nth-child(10) { width: 106px; }
.apps col:nth-child(11) { width: 141px; }
.apps col:nth-child(12) { width: 138px; }
.apps th button {
    display: flex;
    align-items: center;
    width: 100%;
    height: 38px;
    padding: 0 7px;
}
.apps th span {
    flex: 1;
}
.apps th svg {
    width: 16px;
    height: 16px;
}
.apps th .wrap {
    flex-direction: column;
    padding-top: 2px;
}
.apps .wrap span {
    flex: none;
}
.apps .wrap svg {
    align-self: flex-end;
}
.apps td:first-child {
    background: #e6e6e6;
}
.apps tr:nth-child(even) td {
    background: #dfe0f1;
}
.apps tr:nth-child(even) td:first-child {
    background: #c5c7d8;
}
.bar {
    height: 18px;
    border: 1px solid #777;
    border-radius: 4px;
    overflow: hidden;
}
.bar div {
    height: 100%;
    background: linear-gradient(#c4c4c4, #aaa);
    border-right: 1px solid #888;
}
.scrollbar {
    width: 18px;
    display: flex;
    flex-direction: column;
    align-items: center;
    gap: 6px;
    padding: 6px 0;
    background: #e4e4e4;
}
.track {
    flex: 1;
    width: 12px;
}
.thumb {
    height: 59%;
    background: #9c9c9c;
}

/* translate bubble hangs under the address bar */
.translate {
    position: absolute;
    top: 66px;
    right: 140px;
    width: 277px;
    border: 1px solid #bbb;
    background: #f1f1f1;
}
.langs {
    display: flex;
    height: 48px;
    padding: 6px 12px 8px 16px;
    border-bottom: 1px solid #c4c4c4;
    font: bold 12px/16px "Noto Sans CJK SC", sans-serif;
    color: #222;
}
.lang {
    width: 114px;
    border-bottom: 1px solid #bbb;
}
.lang.on {
    width: 65px;
    border-bottom: 2px solid #0039a6;
    color: #0039a6;
}
.icon {
    width: 32px;
    display: flex;
    align-items: center;
    justify-content: center;
}
.icon:nth-child(3) {
    margin-left: 5px;
}
.brand {
    padding: 14px 16px;
    background: #e0e0e0;
    color: #333;
    font: 13px/18px Lato, sans-serif;
}

/* taskbar */
.taskbar {
    display: flex;
    align-items: center;
    height: 43px;
    padding: 0 2px;
    gap: 8px;
    background: #b9b4a8;
    border-top: 1px solid #e8e6e0;
    font: 12px/16px "Noto Sans CJK SC", sans-serif;
    flex: none;
}
.start,
.task {
    display: flex;
    align-items: center;
    height: 38px;
    border: 1px solid #fff;
    border-right: 2px solid #222;
    border-bottom: 2px solid #222;
}
.start {
    width: 47px;
    padding-left: 1px;
}
.sep {
    width: 2px;
    height: 34px;
    background: #fff;
    border-left: 1px solid #777;
}
.tasks {
    flex: 1;
    min-width: 0;
    display: flex;
    gap: 1px;
}
.task {
    flex: 1;
    gap: 7px;
    padding-left: 3px;
    white-space: nowrap;
    overflow: hidden;
    font-family: "Liberation Mono", "Noto Sans CJK SC", monospace;
    font-size: 11px;
}
.task svg {
    width: 32px;
    height: 32px;
}
.task.current {
    background: #efefee;
    border-color: #222 #fff #fff #222;
    font-weight: bold;
}
.ide {
    font: bold 11px "Liberation Sans", sans-serif;
    fill: #fff;
}
.ime {
    font: 12px/16px "Liberation Mono", monospace;
}
.sogou {
    margin-left: 4px;
}
.tray {
    flex: 0 1 632px;
    display: flex;
    align-items: center;
    justify-content: space-between;
    height: 38px;
    padding: 0 2px 0 6px;
    border: 1px solid #666;
    border-right-color: #fff;
    border-bottom-color: #fff;
}
.tray > svg {
    width: 16px;
    height: 16px;
}
.red {
    color: #d8201c;
}
.pink {
    color: #f018a0;
}
.clock {
    width: 98px;
    display: flex;
    flex-direction: column;
    align-items: center;
    white-space: nowrap;
    font: 11px/16px "Liberation Mono", "Noto Sans CJK SC", monospace;
}
.cursor {
    position: absolute;
    left: 848px;
    top: 1065px;
}
```
